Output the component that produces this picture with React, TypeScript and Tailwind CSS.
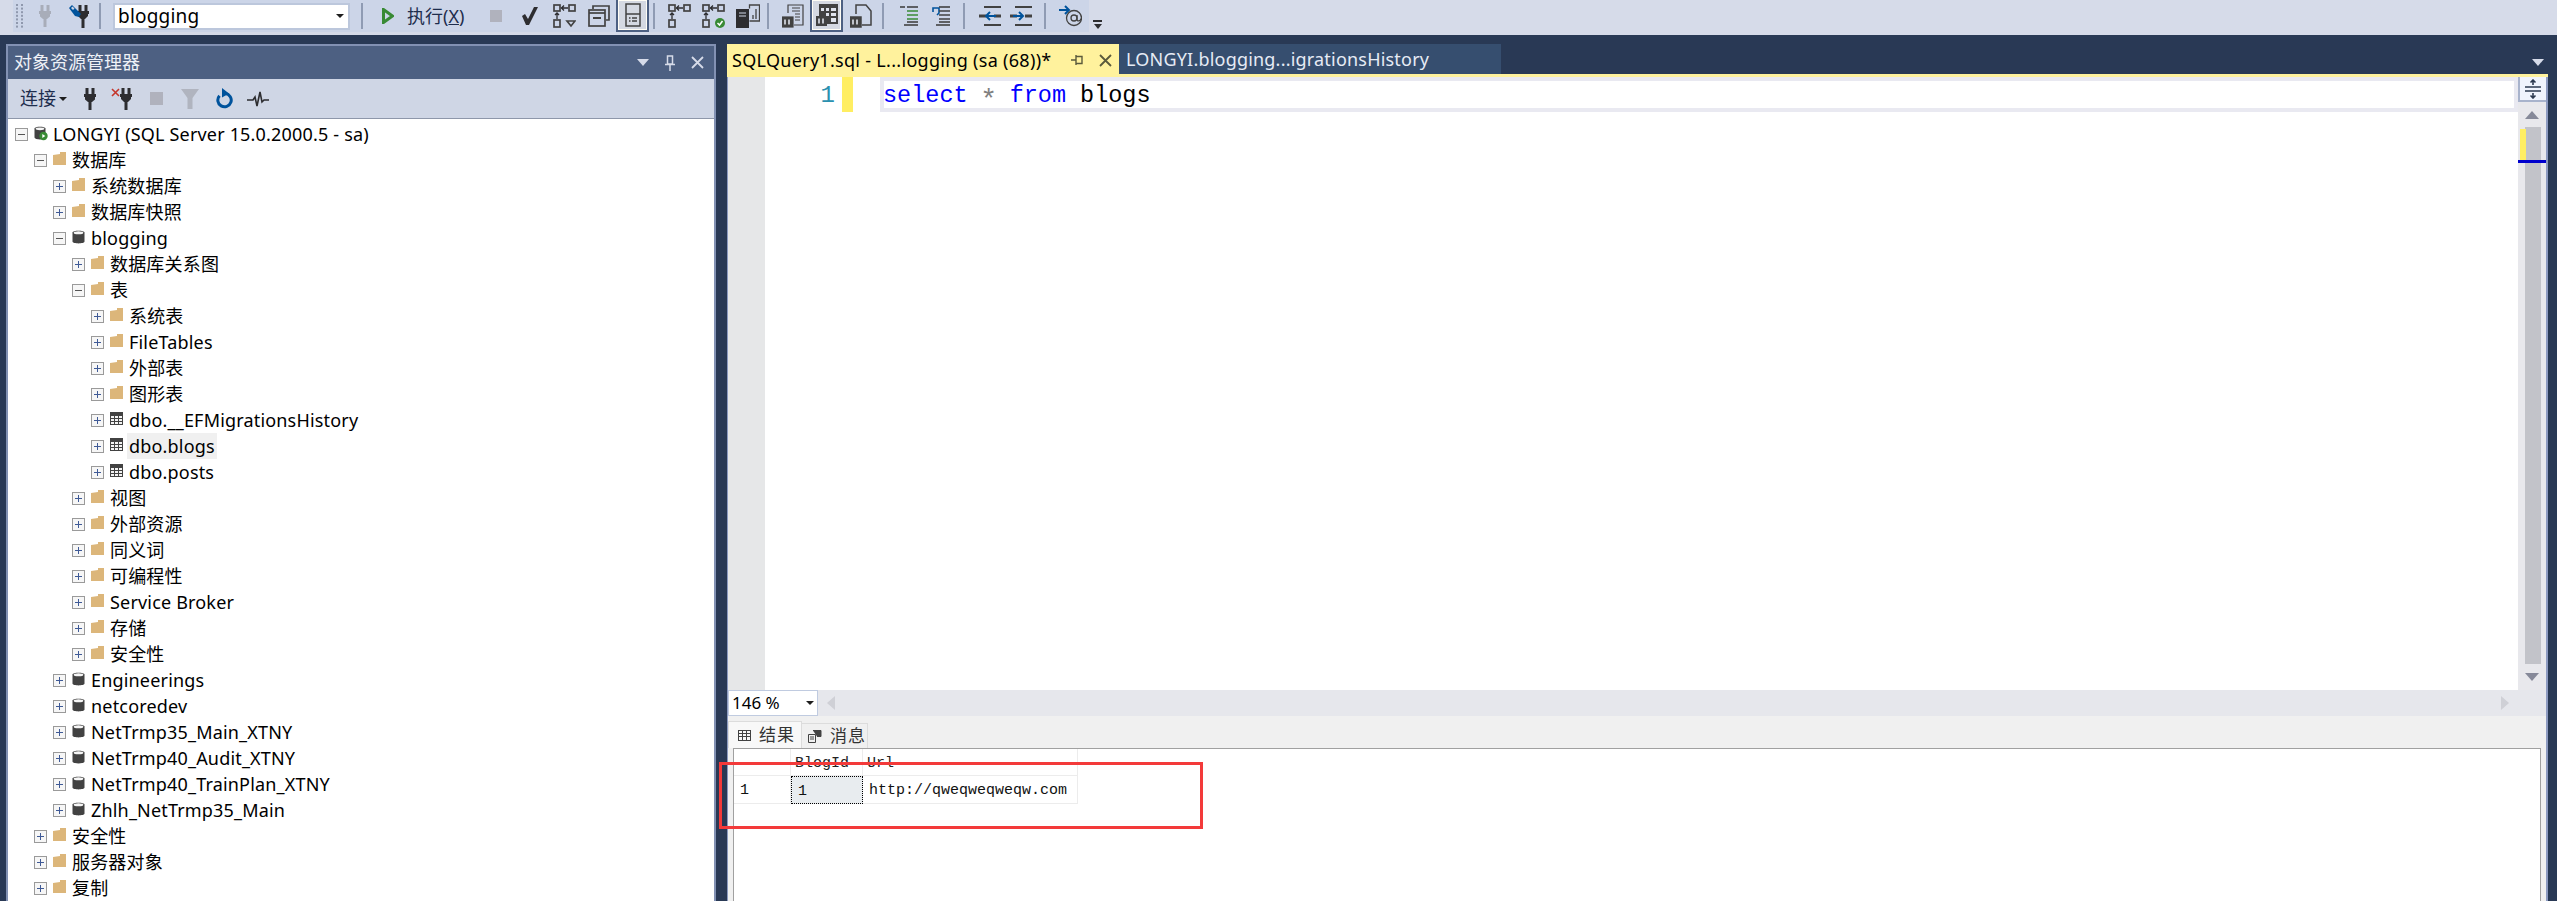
import React from 'react'

const UI = 'font-["Noto_Sans","Noto_Sans_CJK_SC",sans-serif]'
const MONO = 'font-["Liberation_Mono",monospace]'

type IconProps = { className?: string }

function Gripper({ className }: IconProps) {
  return (
    <svg className={className} width="10" height="26" viewBox="0 0 10 26">
      {Array.from({ length: 7 }).map((_, i) => (
        <g key={i} fill="#8f98ad">
          <rect x="1" y={1 + i * 3.6} width="2" height="2" />
          <rect x="6" y={1 + i * 3.6} width="2" height="2" />
        </g>
      ))}
    </svg>
  )
}

function Plug({ className, color = '#2d2d30' }: IconProps & { color?: string }) {
  return (
    <svg className={className} width="14" height="22" viewBox="0 0 14 22" fill={color}>
      <rect x="2.5" y="0" width="3" height="6" />
      <rect x="8.5" y="0" width="3" height="6" />
      <rect x="1" y="6" width="12" height="3" />
      <path d="M2 9h10v2.5L9 14H5L2 11.5z" />
      <rect x="5.5" y="14" width="3" height="8" />
    </svg>
  )
}

function PlugEdit({ className }: IconProps) {
  return (
    <svg className={className} width="22" height="24" viewBox="0 0 22 24">
      <g fill="#2d2d30" transform="translate(8 0)">
        <rect x="2.5" y="1" width="3" height="6" />
        <rect x="8.5" y="1" width="3" height="6" />
        <rect x="1" y="7" width="12" height="3" />
        <path d="M2 10h10v2L9 15H5l-3-3z" />
        <rect x="5.5" y="15" width="3" height="9" />
      </g>
      <path d="M1 4l3-3 9 9-2 3-4-1z" fill="#00539c" />
      <path d="M3 4l1.5-1.5 2 2L5 6z" fill="#cfd6e5" />
    </svg>
  )
}

function PlugX({ className }: IconProps) {
  return (
    <svg className={className} width="22" height="22" viewBox="0 0 22 22">
      <path d="M1 1l7 7M8 1L1 8" stroke="#c5362b" strokeWidth="1.6" />
      <g fill="#2d2d30" transform="translate(8 0)">
        <rect x="2.5" y="0" width="3" height="6" />
        <rect x="8.5" y="0" width="3" height="6" />
        <rect x="1" y="6" width="12" height="3" />
        <path d="M2 9h10v2l-3 3H5l-3-3z" />
        <rect x="5.5" y="14" width="3" height="8" />
      </g>
    </svg>
  )
}

function Filter({ className }: IconProps) {
  return (
    <svg className={className} width="18" height="20" viewBox="0 0 18 20" fill="#b0b4bf">
      <path d="M0 0h18l-6.5 9v11h-5V9z" />
    </svg>
  )
}

function Refresh({ className }: IconProps) {
  return (
    <svg className={className} width="18" height="21" viewBox="0 0 18 21" fill="none">
      <path d="M10.5 5.5a6.7 6.7 0 1 1-6 2.2" stroke="#00539c" strokeWidth="3" />
      <path d="M7 0l7 5.5-7 4z" fill="#00539c" />
    </svg>
  )
}

function Pulse({ className }: IconProps) {
  return (
    <svg className={className} width="22" height="16" viewBox="0 0 22 16" fill="none">
      <path d="M0 9h6l2-3 2 9 3-14 2 10 2-2h5" stroke="#2d2d30" strokeWidth="1.6" />
    </svg>
  )
}

// the little "two boxes and an arrow" query plan family
function PlanBoxes({ className, badge }: IconProps & { badge?: 'check' | 'tri' }) {
  return (
    <svg className={className} width="23" height="24" viewBox="0 0 23 24" fill="none" stroke="#424242" strokeWidth="1.7">
      <rect x="1" y="1" width="6" height="6" />
      <rect x="16" y="1" width="6" height="6" />
      <rect x="1" y="16" width="6" height="7" />
      <path d="M8 4h7M11 1.5L8.5 4 11 6.5M4 15V9M2 11l2-2 2 2" strokeWidth="1.3" stroke="#2d2d30" />
      {badge === 'tri' && <path d="M14 17h8l-4 5z" />}
      {badge === 'check' && (
        <>
          <circle cx="18" cy="19" r="5" fill="#388a34" stroke="none" />
          <path d="M15.5 19l2 2 3-4" stroke="#fff" strokeWidth="1.5" />
        </>
      )}
    </svg>
  )
}

function Windows({ className }: IconProps) {
  return (
    <svg className={className} width="22" height="22" viewBox="0 0 22 22" fill="none" stroke="#424242" strokeWidth="1.7">
      <path d="M5 4V1h16v14h-3" />
      <rect x="1" y="5" width="16" height="16" />
      <path d="M1 8h16" />
      <path d="M5 13h8" strokeWidth="2" />
    </svg>
  )
}

function Calc({ className }: IconProps) {
  return (
    <svg className={className} width="16" height="24" viewBox="0 0 16 24" fill="none" stroke="#424242" strokeWidth="1.5">
      <rect x="1" y="1" width="14" height="22" />
      <path d="M1 11h14" />
      <path d="M4 15h1.5M7 15h5M4 18h1.5M7 18h5" />
    </svg>
  )
}

function Server({ className }: IconProps) {
  return (
    <svg className={className} width="24" height="24" viewBox="0 0 24 24">
      <rect x="0" y="5" width="13" height="19" fill="#2d2d30" />
      <path d="M3 9h7M3 12h7" stroke="#cfd6e5" />
      <path d="M13.5 4.5V1h10v16h-10M17 15v-4M20 15V5" fill="none" stroke="#424242" strokeWidth="1.3" />
    </svg>
  )
}

function ZeroOne() {
  return (
    <g>
      <rect x="0" y="13" width="11" height="10" fill="#424242" />
      <path d="M3 15.5v5M7 15.5v5" stroke="#dfe3ec" strokeWidth="1.6" />
    </g>
  )
}

function ResultText({ className }: IconProps) {
  return (
    <svg className={className} width="22" height="24" viewBox="0 0 22 24" fill="none" stroke="#424242" strokeWidth="1.2">
      <path d="M6 9V1h15v20h-9" />
      <path d="M10 4h8M10 7h8M13 10h5M13 13h5M13 16h5" />
      <ZeroOne />
    </svg>
  )
}

function ResultGrid({ className }: IconProps) {
  return (
    <svg className={className} width="22" height="24" viewBox="0 0 22 24">
      <rect x="3" y="1" width="19" height="20" fill="#424242" />
      <path d="M5 5h3v3H5zM10 5h3v3h-3zM15 5h5v3h-5zM15 10h5v3h-5zM15 15h5v4h-5zM10 10h3v3h-3z" fill="#dfe3ec" />
      <ZeroOne />
    </svg>
  )
}

function ResultFile({ className }: IconProps) {
  return (
    <svg className={className} width="22" height="24" viewBox="0 0 22 24" fill="none" stroke="#424242" strokeWidth="1.5">
      <path d="M6 10V1h10l5 6v14H12" />
      <ZeroOne />
    </svg>
  )
}

function Comment({ className, undo }: IconProps & { undo?: boolean }) {
  return (
    <svg className={className} width="20" height="22" viewBox="0 0 20 22" fill="none" strokeWidth="1.6">
      {undo ? <path d="M2 7V3h6v5L6 10" stroke="#00539c" /> : <path d="M1 2h5" stroke="#424242" />}
      <path d="M8 2h11" stroke="#424242" />
      <path d="M8 6h11M8 10h11M8 14h11" stroke={undo ? '#424242' : '#388a34'} />
      <path d="M5 20h14" stroke="#424242" />
      <path d="M8 17h11" stroke="#424242" />
    </svg>
  )
}

function Indent({ className, dir }: IconProps & { dir: 'left' | 'right' }) {
  return (
    <svg className={className} width="22" height="20" viewBox="0 0 22 20" fill="none" strokeWidth="2">
      <path d="M5 1h17M5 19h17" stroke="#424242" />
      <path d="M0 10h7M15 10h7" stroke="#424242" strokeWidth="3" />
      {dir === 'left' ? (
        <path d="M17 10H7M11 6l-4 4 4 4" stroke="#00539c" />
      ) : (
        <path d="M3 10h10M9 6l4 4-4 4" stroke="#00539c" />
      )}
    </svg>
  )
}

function SendAt({ className }: IconProps) {
  return (
    <svg className={className} width="23" height="22" viewBox="0 0 23 22" fill="none">
      <path d="M0 5h9M6 1l4 4-4 4" stroke="#00539c" strokeWidth="2" />
      <circle cx="15" cy="13" r="7.5" stroke="#424242" strokeWidth="1.3" />
      <circle cx="15" cy="13" r="3" stroke="#424242" strokeWidth="1.3" />
      <path d="M18 10v4.5c0 2 3.5 2 4 -1" stroke="#424242" strokeWidth="1.3" />
    </svg>
  )
}

function Separator({ className }: IconProps) {
  return <div className={`h-[26px] w-[2px] bg-[#8f9bb3] ${className ?? ''}`} />
}

function Active({ children, className }: { children: React.ReactNode; className?: string }) {
  return (
    <div className={`flex h-[32px] w-[33px] items-center justify-center border-x-[2px] border-b-[2px] border-[#4d6082] bg-[#fffdf5] ${className ?? ''}`}>
      <div className="flex h-[28px] w-[27px] items-center justify-center bg-[#d5d9e2]">{children}</div>
    </div>
  )
}

function TopToolbar() {
  return (
    <div className="flex h-[35px] shrink-0 bg-[#d6dbe9]">
      <div className="ml-[13px] flex h-[32px] w-[1076px] items-center bg-[#ccd5e8] pl-[2px]">
        <Gripper />
        <Plug className="ml-[13px]" color="#a8adb9" />
        <PlugEdit className="ml-[16px]" />
        <Separator className="ml-[9px]" />
        <div className="ml-[12px] flex h-[27px] w-[237px] items-center justify-between border-[2px] border-[#bcc7dc] bg-white pl-[3px] pr-[4px] text-[19px] tracking-[0.2px] text-black">
          <span>blogging</span>
          <span className="h-0 w-0 border-x-[4px] border-t-[4px] border-x-transparent border-t-[#1e1e1e]" />
        </div>
        <Separator className="ml-[11px]" />
        <svg className="ml-[19px]" width="12" height="16" viewBox="0 0 12 16">
          <path d="M1.5 1.5v13l9-6.500z" fill="none" stroke="#388a34" strokeWidth="3" />
        </svg>
        <span className="ml-[13px] w-[58px] whitespace-nowrap text-[18px] text-[#1e2d4d]">
          执行(<span className="underline">X</span>)
        </span>
        <div className="ml-[25px] h-[12px] w-[12px] bg-[#b0b2bd]" />
        <svg className="ml-[19px]" width="18" height="18" viewBox="0 0 18 18">
          <path d="M1 9l3-2 3 5 6-12h4L8 18H5z" fill="#2d2d30" />
        </svg>
        <PlanBoxes className="ml-[14px]" badge="tri" />
        <Windows className="ml-[12px]" />
        <Active className="ml-[6px] -mt-[1px]">
          <Calc />
        </Active>
        <Separator className="ml-[4px]" />
        <PlanBoxes className="ml-[13px]" />
        <PlanBoxes className="ml-[11px]" badge="check" />
        <Server className="ml-[11px]" />
        <Separator className="ml-[7px]" />
        <ResultText className="ml-[13px]" />
        <Active className="ml-[6px] -mt-[1px]">
          <ResultGrid />
        </Active>
        <ResultFile className="ml-[7px]" />
        <Separator className="ml-[10px]" />
        <Comment className="ml-[15px]" />
        <Comment className="ml-[12px]" undo />
        <Separator className="ml-[12px]" />
        <Indent className="ml-[14px]" dir="left" />
        <Indent className="ml-[9px]" dir="right" />
        <Separator className="ml-[12px]" />
        <SendAt className="ml-[13px]" />
      </div>
      <div className="flex h-[32px] w-[17px] flex-col items-center justify-end bg-[#d6dbe9] pb-[3px]">
        <div className="mb-[2px] h-[2px] w-[9px] bg-[#2d2d30]" />
        <span className="h-0 w-0 border-x-[4.5px] border-t-[5px] border-x-transparent border-t-[#2d2d30]" />
      </div>
    </div>
  )
}

function Expander({ open }: { open: boolean }) {
  return (
    <svg className="shrink-0" width="13" height="13" viewBox="0 0 13 13">
      <rect x="0.5" y="0.5" width="12" height="12" fill="#f6f6f6" stroke="#9a9a9a" />
      <path d="M3 6.5h7" stroke={open ? '#555' : '#3f5a96'} />
      {!open && <path d="M6.5 3v7" stroke="#3f5a96" />}
    </svg>
  )
}

function Folder() {
  return (
    <svg className="-mt-[3px] shrink-0" width="13" height="13" viewBox="0 0 13 13">
      <path d="M0 3l7-1V0h6v13H0z" fill="#dcb67a" />
    </svg>
  )
}

function Db() {
  return (
    <svg className="-mt-[3px] shrink-0" width="13" height="14" viewBox="0 0 13 14">
      <path d="M0.5 2.5C0.5 0 12.5 0 12.5 2.5v9c0 2.5-12 2.5-12 0z" fill="#424242" />
      <ellipse cx="6.5" cy="2.8" rx="4.8" ry="1.5" fill="#f6f6f6" />
    </svg>
  )
}

function ServerDb() {
  return (
    <svg className="-mt-[1px] shrink-0" width="14" height="15" viewBox="0 0 14 15">
      <path d="M0.5 2.5C0.5 0 11.5 0 11.5 2.5v9c0 2.5-11 2.5-11 0z" fill="#424242" />
      <ellipse cx="6" cy="2.8" rx="4.4" ry="1.4" fill="#f6f6f6" />
      <circle cx="9.5" cy="10" r="4.2" fill="#388a34" />
      <path d="M8.3 8v4l3-2z" fill="#fff" />
    </svg>
  )
}

function TableIcon() {
  return (
    <svg className="-mt-[3px] shrink-0" width="13" height="13" viewBox="0 0 13 13">
      <rect width="13" height="13" fill="#424242" />
      <path d="M1 4h3v2H1zM5 4h3v2H5zM9 4h3v2H9zM1 7h3v2H1zM5 7h3v2H5zM9 7h3v2H9zM1 10h3v2H1zM5 10h3v2H5zM9 10h3v2H9z" fill="#f3f3f3" />
    </svg>
  )
}

type TreeItem = {
  level: number
  label: string
  icon: 'folder' | 'db' | 'table' | 'server'
  open?: boolean
  selected?: boolean
}

const TREE: TreeItem[] = [
  { level: 0, label: 'LONGYI (SQL Server 15.0.2000.5 - sa)', icon: 'server', open: true },
  { level: 1, label: '数据库', icon: 'folder', open: true },
  { level: 2, label: '系统数据库', icon: 'folder' },
  { level: 2, label: '数据库快照', icon: 'folder' },
  { level: 2, label: 'blogging', icon: 'db', open: true },
  { level: 3, label: '数据库关系图', icon: 'folder' },
  { level: 3, label: '表', icon: 'folder', open: true },
  { level: 4, label: '系统表', icon: 'folder' },
  { level: 4, label: 'FileTables', icon: 'folder' },
  { level: 4, label: '外部表', icon: 'folder' },
  { level: 4, label: '图形表', icon: 'folder' },
  { level: 4, label: 'dbo.__EFMigrationsHistory', icon: 'table' },
  { level: 4, label: 'dbo.blogs', icon: 'table', selected: true },
  { level: 4, label: 'dbo.posts', icon: 'table' },
  { level: 3, label: '视图', icon: 'folder' },
  { level: 3, label: '外部资源', icon: 'folder' },
  { level: 3, label: '同义词', icon: 'folder' },
  { level: 3, label: '可编程性', icon: 'folder' },
  { level: 3, label: 'Service Broker', icon: 'folder' },
  { level: 3, label: '存储', icon: 'folder' },
  { level: 3, label: '安全性', icon: 'folder' },
  { level: 2, label: 'Engineerings', icon: 'db' },
  { level: 2, label: 'netcoredev', icon: 'db' },
  { level: 2, label: 'NetTrmp35_Main_XTNY', icon: 'db' },
  { level: 2, label: 'NetTrmp40_Audit_XTNY', icon: 'db' },
  { level: 2, label: 'NetTrmp40_TrainPlan_XTNY', icon: 'db' },
  { level: 2, label: 'Zhlh_NetTrmp35_Main', icon: 'db' },
  { level: 1, label: '安全性', icon: 'folder' },
  { level: 1, label: '服务器对象', icon: 'folder' },
  { level: 1, label: '复制', icon: 'folder' },
]

function TreeRow({ item }: { item: TreeItem }) {
  return (
    <div className="flex h-[26px] shrink-0 items-center" style={{ paddingLeft: 7 + item.level * 19 }}>
      <Expander open={!!item.open} />
      <div className="ml-[6px] flex w-[13px] shrink-0 justify-center">
        {item.icon === 'folder' && <Folder />}
        {item.icon === 'db' && <Db />}
        {item.icon === 'table' && <TableIcon />}
        {item.icon === 'server' && <ServerDb />}
      </div>
      <span className={`ml-[4px] flex h-full items-center whitespace-nowrap px-[2px] text-[18px] tracking-[0.18px] text-black ${item.selected ? 'bg-[#f0f0f0]' : ''}`}>
        {item.label}
      </span>
    </div>
  )
}

function ObjectExplorer() {
  return (
    <div className="flex w-[710px] shrink-0 flex-col overflow-hidden border-x-[2px] border-t-[2px] border-[#8291b3]">
      <div className="flex h-[33px] shrink-0 items-center bg-[#4d6082] pl-[6px] text-[18px] text-[#eef1f7]">
        <span>对象资源管理器</span>
        <svg className="ml-auto" width="12" height="7" viewBox="0 0 12 7">
          <path d="M0 0h12L6 7z" fill="#d6dbe9" />
        </svg>
        <svg className="ml-[16px]" width="10" height="16" viewBox="0 0 10 16" fill="none" stroke="#d6dbe9" strokeWidth="1.5">
          <path d="M2.5 1h5v8h-5zM0 9.5h10M5 10v6" />
        </svg>
        <svg className="ml-[16px] mr-[10px]" width="13" height="13" viewBox="0 0 13 13" stroke="#d6dbe9" strokeWidth="1.8">
          <path d="M1 1l11 11M12 1L1 12" />
        </svg>
      </div>
      <div className="flex h-[40px] shrink-0 items-center border-b-[1px] border-[#8e97aa] bg-[#cfd6e5] pl-[12px]">
        <span className="text-[18px] text-[#1e2d4d]">连接</span>
        <span className="ml-[3px] h-0 w-0 border-x-[4px] border-t-[4px] border-x-transparent border-t-[#1e1e1e]" />
        <Plug className="ml-[16px]" />
        <PlugX className="ml-[14px]" />
        <div className="ml-[17px] h-[13px] w-[13px] bg-[#b0b2bd]" />
        <Filter className="ml-[18px]" />
        <Refresh className="ml-[16px]" />
        <Pulse className="ml-[14px]" />
      </div>
      <div className="flex min-h-0 flex-1 flex-col overflow-hidden bg-white pt-[2px]">
        {TREE.map((item) => (
          <TreeRow key={`${item.level}-${item.label}`} item={item} />
        ))}
      </div>
    </div>
  )
}

function TabStrip() {
  return (
    <div className="relative flex h-[33px] shrink-0 items-start border-b-[3px] border-[#fff29d]">
      <div className="flex h-[33px] w-[392px] items-center bg-[#fff29d] pl-[5px] text-[18px] tracking-[0.3px] text-black">
        <span className="whitespace-nowrap">SQLQuery1.sql - L...logging (sa (68))*</span>
        <svg className="ml-auto" width="13" height="11" viewBox="0 0 13 11" fill="none" stroke="#5a5a3c" strokeWidth="1.4">
          <path d="M5 1.5h6v7H5zM5 0v10M0 5h5" />
        </svg>
        <svg className="ml-[15px] mr-[7px]" width="13" height="13" viewBox="0 0 13 13" stroke="#5a5a3c" strokeWidth="1.8">
          <path d="M1 1l11 11M12 1L1 12" />
        </svg>
      </div>
      <div className="flex h-[30px] w-[382px] items-center bg-[#364e6f] pl-[7px] text-[18px] tracking-[0.2px] text-[#e6ebf5]">
        <span className="whitespace-nowrap">LONGYI.blogging...igrationsHistory</span>
      </div>
      <svg className="ml-auto mr-[4px] mt-[15px]" width="12" height="7" viewBox="0 0 12 7">
        <path d="M0 0h12L6 7z" fill="#d6dbe9" />
      </svg>
    </div>
  )
}

function Editor() {
  return (
    <div className="flex h-[613px] shrink-0">
      <div className="w-[37px] shrink-0 bg-[#e6e7e8]" />
      <div className="min-w-0 flex-1 bg-white">
        <div className="flex h-[35px] items-stretch">
          <div className={`flex w-[70px] shrink-0 items-center justify-end pt-[2px] text-[24px] text-[#2b91af] ${MONO}`}>1</div>
          <div className="ml-[7px] w-[11px] shrink-0 bg-[#ffee62]" />
          <div className={`ml-[27px] flex flex-1 items-center border-[4px] border-[#e9e9f1] pt-[2px] text-[23.5px] text-black ${MONO}`}>
            <span className="-ml-[1px] text-[#0000ff]">select</span>
            <span className="ml-[14px] flex w-[14px] translate-y-[5px] justify-center text-[28px] leading-none text-[#808080]">*</span>
            <span className="ml-[14px] text-[#0000ff]">from</span>
            <span className="ml-[14px]">blogs</span>
          </div>
        </div>
      </div>
      <div className="relative flex w-[28px] shrink-0 flex-col items-center bg-[#e8e8ec]">
        <div className="flex h-[25px] w-full items-center justify-center border-l-[2px] border-b-[2px] border-[#a8b3cc] bg-[#f0f4fd]">
          <svg width="16" height="20" viewBox="0 0 16 20" fill="none" stroke="#2d3a50" strokeWidth="1.6">
            <path d="M0 8h16M0 12h16M8 1v5M8 14v5M5.5 3.5L8 1l2.5 2.5M5.5 16.5L8 19l2.5-2.5" />
          </svg>
        </div>
        <svg className="mt-[9px]" width="14" height="8" viewBox="0 0 14 8">
          <path d="M7 0l7 8H0z" fill="#868999" />
        </svg>
        <div className="mt-[8px] ml-[2px] w-[16px] flex-1 bg-[#c2c3c9]" />
        <svg className="mb-[9px] mt-[9px]" width="14" height="8" viewBox="0 0 14 8">
          <path d="M0 0h14L7 8z" fill="#868999" />
        </svg>
        <div className="absolute left-[2px] top-[52px] h-[34px] w-[6px] bg-[#ffee62]" />
        <div className="absolute left-0 top-[83px] h-[3px] w-full bg-[#0000cd]" />
      </div>
    </div>
  )
}

function HScrollRow() {
  return (
    <div className="flex h-[26px] shrink-0 items-center bg-[#e6e7ec] pr-[37px]">
      <div className="flex h-full w-[90px] items-center justify-between border-[1px] border-[#c0cbe0] bg-white pl-[3px] pr-[3px] text-[17px] text-black">
        <span>146 %</span>
        <span className="h-0 w-0 border-x-[4px] border-t-[4px] border-x-transparent border-t-[#1e1e1e]" />
      </div>
      <svg className="ml-[9px]" width="8" height="14" viewBox="0 0 8 14">
        <path d="M8 0v14L0 7z" fill="#cfd0d6" />
      </svg>
      <svg className="ml-auto" width="8" height="14" viewBox="0 0 8 14">
        <path d="M0 0v14l8-7z" fill="#cfd0d6" />
      </svg>
    </div>
  )
}

function Results() {
  return (
    <div className="flex min-h-0 flex-1 flex-col bg-[#f0f0f0]">
      <div className="flex h-[32px] shrink-0 items-end">
        <div className="flex h-[27px] w-[74px] items-center border-x-[1px] border-t-[1px] border-[#dcdcdc] bg-[#f8f8f8] pl-[9px] text-[17px] text-[#333]">
          <svg width="13" height="11" viewBox="0 0 13 11">
            <rect width="13" height="11" fill="#424242" />
            <path d="M1 1h3v2H1zM5 1h3v2H5zM9 1h3v2H9zM1 4h3v2H1zM5 4h3v2H5zM9 4h3v2H9zM1 7h3v3H1zM5 7h3v3H5zM9 7h3v3H9z" fill="#f8f8f8" />
          </svg>
          <span className="ml-[8px] tracking-[1px]">结果</span>
        </div>
        <div className="flex h-[25px] w-[66px] items-center border-r-[1px] border-t-[1px] border-[#dcdcdc] pl-[6px] text-[17px] text-[#333]">
          <svg width="14" height="13" viewBox="0 0 14 13" fill="none" stroke="#424242">
            <path d="M.5 4.500h7v8h-7zM2 7h4M2 9h4" />
            <path d="M5 .5h8v6H9" fill="#424242" />
          </svg>
          <span className="ml-[8px] tracking-[1px]">消息</span>
        </div>
      </div>
      <div className="mx-[5px] min-h-0 flex-1 border-x-[1px] border-t-[1px] border-[#a0a0a0] bg-white">
        <div className={`flex h-[27px] text-[15px] text-[#222] ${MONO}`}>
          <div className="w-[57px] border-b-[1px] border-r-[1px] border-[#ececec]" />
          <div className="flex w-[72px] items-center border-b-[1px] border-r-[1px] border-[#ececec] pl-[4px] pt-[4px]">BlogId</div>
          <div className="flex w-[215px] items-center border-b-[1px] border-r-[1px] border-[#ececec] pl-[4px] pt-[4px]">Url</div>
        </div>
        <div className={`flex h-[28px] text-[15px] text-[#111] ${MONO}`}>
          <div className="flex w-[57px] items-center border-b-[1px] border-r-[1px] border-[#ececec] pl-[6px] pt-[4px]">1</div>
          <div className="flex w-[72px] items-center border-[1px] border-dotted border-black bg-[#e8ecef] pl-[6px] pt-[4px]">1</div>
          <div className="flex w-[215px] items-center border-b-[1px] border-r-[1px] border-[#ececec] pl-[6px] pt-[4px]">http://qweqweqweqw.com</div>
        </div>
      </div>
    </div>
  )
}

export default function App() {
  return (
    <div className={`relative flex h-[901px] w-[2557px] flex-col overflow-hidden bg-[#293955] ${UI}`}>
      <TopToolbar />
      <div className="flex min-h-0 flex-1 pl-[6px] pr-[9px] pt-[9px]">
        <ObjectExplorer />
        <div className="ml-[11px] flex min-w-0 flex-1 flex-col">
          <TabStrip />
          <div className="flex min-h-0 flex-1 flex-col border-r-[2px] border-l-[1px] border-[#8c9ac0]">
            <Editor />
            <HScrollRow />
            <Results />
          </div>
        </div>
      </div>
      {/* annotation from the screenshot */}
      <div className="pointer-events-none absolute left-[719px] top-[762px] h-[67px] w-[484px] border-[3px] border-[#f33a3a]" />
    </div>
  )
}
